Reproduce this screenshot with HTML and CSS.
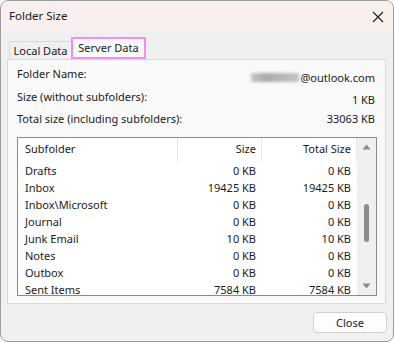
FILE: index.html
```html
<!DOCTYPE html>
<html>
<head>
<meta charset="utf-8">
<link rel="stylesheet" href="styles.css">
</head>
<body>
<div class="window">
  <div class="titlebar">
    <span class="title">Folder Size</span>
    <svg class="close-x" width="12" height="12" viewBox="0 0 12 12"><path d="M1 1L11 11M11 1L1 11" stroke="#1a1a1a" stroke-width="1.1" fill="none"/></svg>
  </div>
  <div class="content">
    <div class="tabs">
      <div class="tab">Local Data</div>
      <div class="tab active">Server Data</div>
    </div>
    <div class="panel">
      <div class="info r1"><span>Folder Name:</span><span class="val"><span class="blur"></span>@outlook.com</span></div>
      <div class="info r2"><span>Size (without subfolders):</span><span class="val">1 KB</span></div>
      <div class="info r3"><span>Total size (including subfolders):</span><span class="val">33063 KB</span></div>
      <div class="list">
        <div class="table">
          <div class="row head">
            <div class="c1">Subfolder</div><div class="c2">Size</div><div class="c3">Total Size</div>
          </div>
          <div class="row"><div class="c1">Drafts</div><div class="c2">0 KB</div><div class="c3">0 KB</div></div>
          <div class="row"><div class="c1">Inbox</div><div class="c2">19425 KB</div><div class="c3">19425 KB</div></div>
          <div class="row"><div class="c1">Inbox\Microsoft</div><div class="c2">0 KB</div><div class="c3">0 KB</div></div>
          <div class="row"><div class="c1">Journal</div><div class="c2">0 KB</div><div class="c3">0 KB</div></div>
          <div class="row"><div class="c1">Junk Email</div><div class="c2">10 KB</div><div class="c3">10 KB</div></div>
          <div class="row"><div class="c1">Notes</div><div class="c2">0 KB</div><div class="c3">0 KB</div></div>
          <div class="row"><div class="c1">Outbox</div><div class="c2">0 KB</div><div class="c3">0 KB</div></div>
          <div class="row"><div class="c1">Sent Items</div><div class="c2">7584 KB</div><div class="c3">7584 KB</div></div>
        </div>
        <div class="scrollbar">
          <svg class="arrow" width="9" height="6" viewBox="0 0 9 6"><path d="M0.5 5.5L4.5 0.5L8.5 5.5Z" fill="#8a8a8a"/></svg>
          <div class="track"><div class="thumb"></div></div>
          <svg class="arrow" width="9" height="6" viewBox="0 0 9 6"><path d="M0.5 0.5L4.5 5.5L8.5 0.5Z" fill="#8a8a8a"/></svg>
        </div>
      </div>
    </div>
    <div class="footer">
      <button class="btn">Close</button>
    </div>
  </div>
</div>
</body>
</html>
```

FILE: styles.css
```css
html, body {
  margin: 0;
  padding: 0;
  background: #ffffff;
}
body {
  font-family: "Noto Sans", "Open Sans", sans-serif;
  font-size: 11px;
  color: #1a1a1a;
}
.window {
  width: 394px;
  height: 342px;
  box-sizing: border-box;
  border: 1px solid #9c9c9c;
  border-radius: 8px;
  overflow: hidden;
  background: #f0f0f0;
}
.titlebar {
  height: 30px;
  background: #f8f0ee;
  display: flex;
  align-items: center;
  justify-content: space-between;
  padding: 0 9px 0 8px;
}
.title {
  font-size: 11.5px;
  line-height: 16px;
}
.close-x {
  display: block;
  margin-top: 1px;
}
.content {
  padding: 6px 7px 0 6px;
}
.tabs {
  display: flex;
  align-items: flex-end;
  height: 22px;
  padding-left: 2px;
}
.tab {
  width: 62px;
  height: 18px;
  box-sizing: border-box;
  border: 1px solid #d9d9d9;
  border-bottom: none;
  border-right: none;
  text-align: center;
  line-height: 17px;
  background: #f0f0f0;
}
.tab.active {
  width: 75px;
  height: 22px;
  border: 2px solid #f48cf2;
  background: #f9f9f9;
  line-height: 17px;
}
.panel {
  border: 1px solid #d9d9d9;
  background: #f9f9f9;
  padding: 5px 8px 7px 9px;
}
.info {
  display: flex;
  justify-content: space-between;
  line-height: 16px;
  margin-right: 2px;
}
.r1 { height: 24px; padding-top: 1px; box-sizing: border-box; }
.r2 { height: 22px; }
.r3 { height: 16px; margin-bottom: 10px; }
.val {
  display: flex;
  align-items: center;
}
.blur {
  display: inline-block;
  width: 48px;
  height: 9px;
  margin-right: 1px;
  background: linear-gradient(90deg, #c9c9c9, #a9a9a9 30%, #b5b5b5 60%, #c4c4c4);
  filter: blur(1.5px);
}
.list {
  height: 159px;
  box-sizing: border-box;
  border: 1px solid #8a8a8a;
  background: #ffffff;
  display: flex;
  overflow: hidden;
}
.table {
  width: 339px;
  overflow: hidden;
}
.row {
  display: grid;
  grid-template-columns: 160px 84px 95px;
  height: 17px;
  line-height: 17px;
}
.row.head {
  height: 24px;
  line-height: 24px;
}
.c1 {
  padding-left: 7px;
}
.c2, .c3 {
  text-align: right;
  padding-right: 6px;
}
.head .c1, .head .c2, .head .c3 {
  box-sizing: border-box;
  border-right: 1px solid #e5e5e5;
  height: 23px;
  line-height: 22px;
}
.head .c2, .head .c3 {
  padding-right: 5px;
}
.scrollbar {
  width: 19px;
  background: #f0f0f0;
  display: flex;
  flex-direction: column;
  align-items: center;
  padding: 6px 0 6px;
  box-sizing: border-box;
}
.arrow {
  display: block;
}
.track {
  flex: 1;
  width: 100%;
  display: flex;
  justify-content: center;
  padding-top: 54px;
}
.thumb {
  width: 5px;
  height: 38px;
  border-radius: 3px;
  background: #8b8b8b;
}
.footer {
  display: flex;
  justify-content: flex-end;
  padding-top: 8px;
  margin-right: -1px;
}
.btn {
  width: 74px;
  height: 21px;
  box-sizing: border-box;
  border: 1px solid #d0d0d0;
  border-radius: 4px;
  background: #fdfdfd;
  font-family: "Noto Sans", "Open Sans", sans-serif;
  font-size: 11px;
  color: #1a1a1a;
  padding: 0;
  line-height: 18px;
}
```
